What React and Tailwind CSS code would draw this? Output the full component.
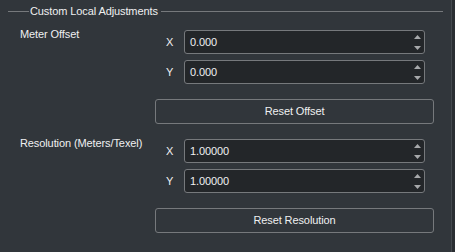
import React from 'react'

const font = { fontFamily: '"Liberation Sans", Arial, sans-serif' }

function Spin({ axis, value }) {
  return (
    <div className="flex items-center h-[24px]">
      <span className="w-[29px] text-center text-[11px] text-[#eff0f1]">{axis}</span>
      <div className="relative flex items-center w-[241px] h-[24px] rounded-[3px] border border-[#76797c] bg-[#232629] pl-[5px]">
        <span className="text-[11px] text-[#eff0f1]">{value}</span>
        <svg className="absolute right-[2px] top-[3px]" width="9" height="17" viewBox="0 0 9 17">
          <path d="M4.5 1 L8 5 L1 5 Z" fill="#a7a9ab" />
          <path d="M1 12 L8 12 L4.5 16 Z" fill="#a7a9ab" />
        </svg>
      </div>
    </div>
  )
}

function Block({ label, x, y, button }) {
  return (
    <div className="flex">
      <div className="w-[135px] -mt-[4px] text-[11px] leading-[16px] whitespace-nowrap text-[#eff0f1]">{label}</div>
      <div className="flex flex-col w-[279px]">
        <Spin axis="X" value={x} />
        <div className="mt-[6px]">
          <Spin axis="Y" value={y} />
        </div>
        <button className="mt-[15px] h-[25px] w-[279px] rounded-[3px] border border-[#76797c] bg-transparent text-[11px] text-[#eff0f1]">
          {button}
        </button>
      </div>
    </div>
  )
}

export default function App() {
  return (
    <div className="flex w-[455px] h-[252px] bg-[#31363b] overflow-hidden tracking-[-0.1px]" style={font}>
      <div className="flex-1 flex flex-col">
        <div className="flex items-center h-[22px] pl-[8px] pr-[8px]">
          <div className="w-[21px] h-px bg-[#76797c]" />
          <span className="px-[1px] text-[11px] text-[#eff0f1] whitespace-nowrap">Custom Local Adjustments</span>
          <div className="flex-1 h-px bg-[#76797c] ml-[2px]" />
        </div>
        <div className="flex flex-col pl-[20px] mt-[8px]">
          <Block label="Meter Offset" x="0.000" y="0.000" button="Reset Offset" />
          <div className="mt-[15px]">
            <Block label="Resolution (Meters/Texel)" x="1.00000" y="1.00000" button="Reset Resolution" />
          </div>
        </div>
      </div>
      <div className="w-[4px] h-full border-l border-[#44494e] bg-[#2a2e32]" />
    </div>
  )
}
